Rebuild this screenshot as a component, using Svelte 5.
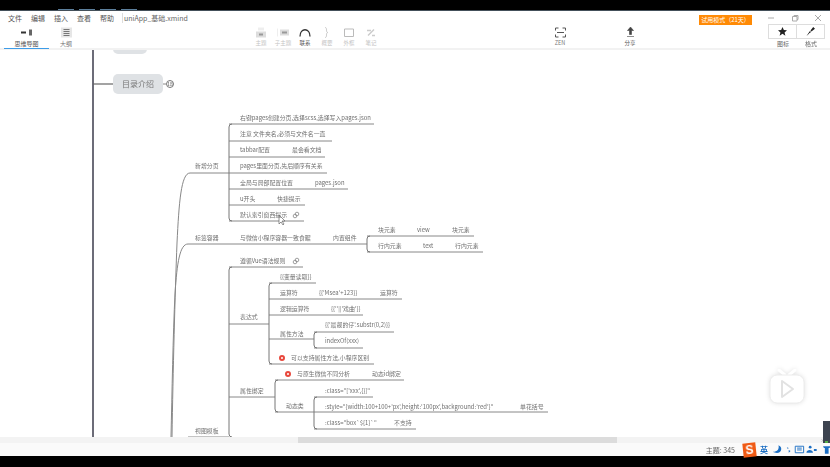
<script lang="ts">
	const menus = ['文件', '编辑', '插入', '查看', '帮助'];
	const tools = ['主题', '子主题', '联系', '概要', '外框', '笔记'];

	// 画布上的文字：x、中线 y、内容
	const labels = [
		[240, 118, '右键pages创建分页,选择scss,选择写入pages.json'],
		[240, 134, '注意  文件夹名,必须与文件名一直'],
		[240, 150, 'tabbar配置'],
		[292, 150, '最会看文档'],
		[240, 166, 'pages里面分页,先后顺序有关系'],
		[195, 166, '新增分页'],
		[240, 183, '全局与局部配置位置'],
		[315, 183, 'pages.json'],
		[240, 199, 'u开头'],
		[277, 199, '快捷提示'],
		[240, 215, '默认索引窗西提示'],
		[195, 238, '标签容器'],
		[240, 238, '与微信小程序容器一致食踞'],
		[333, 238, '内置组件'],
		[378, 230, '块元素'],
		[417, 230, 'view'],
		[452, 230, '块元素'],
		[378, 246, '行内元素'],
		[423, 246, 'text'],
		[455, 246, '行内元素'],
		[240, 261, '遵循Vue语法规则'],
		[280, 277, '{{变量读取}}'],
		[280, 293, '运算符'],
		[319, 293, "{{'Msea'+123}}"],
		[380, 293, '运算符'],
		[280, 309, '逻辑运算符'],
		[331, 309, "{{''||'戏曲'}}"],
		[240, 317, '表达式'],
		[325, 325, "{{'最靓的仔'.substr(0,2)}}"],
		[280, 334, '属性方法'],
		[325, 341, 'indexOf(xxx)'],
		[291, 358, '可以支持属性方法,小程序区别'],
		[297, 374, '与原生微信不同分析'],
		[372, 374, '动态id绑定'],
		[240, 391, '属性绑定'],
		[325, 391, `:class="['xxx',{}]"`],
		[286, 406, '动态类'],
		[325, 407, `:style="{width:100+100+'px',height:'100px',background:'red'}"`],
		[520, 407, '单花括号'],
		[325, 423, ':class="box`${1}`"'],
		[394, 423, '不支持'],
		[195, 431, '视图模板']
	];

	// 节点下划线：x1、x2、y（y 相对整页，画布从 50 开始）
	const rules = [
		[229, 374, 124], [229, 332, 141], [229, 325, 157], [190, 327, 173],
		[229, 348, 189], [229, 305, 205], [229, 304, 221], [188, 367, 244],
		[367, 474, 236], [367, 483, 252], [229, 303, 267], [229, 269, 324],
		[269, 316, 283], [269, 402, 299], [269, 363, 315], [269, 314, 339],
		[314, 394, 332], [314, 363, 348], [269, 374, 364], [229, 275, 397],
		[275, 404, 380], [275, 314, 412], [314, 373, 397], [314, 548, 412],
		[314, 416, 429], [188, 229, 437]
	];

	// 括号竖线：x、y1、y2
	const brackets = [
		[229, 124, 221], [367, 236, 252], [229, 267, 437],
		[269, 283, 364], [314, 332, 348], [275, 380, 412], [314, 397, 429]
	];

	const warnings = [[282, 358], [288, 374]];
	const linkIcons = [[296, 215], [296, 261]];
</script>

<div class="screen">
	<div class="letterbox top">
		<span class="tab-glow"></span><span class="tab-glow"></span><span class="tab-glow"></span><span class="tab-glow"></span>
	</div>

	<div class="window">
		<header class="titlebar">
			<nav class="menus">
				{#each menus as menu}<span>{menu}</span>{/each}
			</nav>
			<span class="filename">uniApp_基础.xmind</span>
			<span class="trial">试用模式（21天）</span>
			<div class="winctl">
				<svg width="8" height="8" viewBox="0 0 8 8"><path d="M1 4h6" stroke="#aaa" fill="none" /></svg>
				<svg width="8" height="8" viewBox="0 0 8 8"><path d="M1.500 2.500h4.500v4.500h-4.500zM3 2.500v-1h4v4h-1" stroke="#aaa" fill="none" /></svg>
				<svg width="8" height="8" viewBox="0 0 8 8"><path d="M1 1l6 6M7 1l-6 6" stroke="#aaa" fill="none" /></svg>
			</div>
		</header>

		<div class="toolbar">
			<div class="tab active">
				<svg width="14" height="10" viewBox="0 0 14 10"><path d="M1 5h5" stroke="#333" stroke-width="2" /><path d="M9 2h3v6h-3z" fill="#666" /></svg>
				<span>思维导图</span>
			</div>
			<div class="tab outline">
				<svg width="11" height="10" viewBox="0 0 11 10"><rect width="11" height="10" fill="#e6e6e6" /><path d="M2.500 2h6M2.500 4h6M2.500 6h6M2.500 8h6" stroke="#777" /></svg>
				<span>大纲</span>
			</div>

			<div class="tools">
				{#each tools as tool, i}
					<div class="tool" class:on={i === 2}>
						<svg width="12" height="10" viewBox="0 0 12 10">
							{#if i === 0}
								<path d="M3 0h6v3h-6z" fill="#eee" /><path d="M1 4h10v6h-10z" fill="#ddd" /><path d="M4 6h4v2h-4z" fill="#999" />
							{:else if i === 1}
								<path d="M0 1v8" stroke="#ddd" /><path d="M3 2h9v6h-9z" fill="#ddd" /><path d="M5 4h5v2h-5z" fill="#999" />
							{:else if i === 2}
								<path d="M1 9c0-9 10-9 10 0" stroke="#333" stroke-width="1.300" fill="none" />
							{:else if i === 3}
								<path d="M4 0c3 0 0 5 3 5c-3 0 0 5-3 5" stroke="#ccc" fill="none" />
							{:else if i === 4}
								<path d="M1.500 1.500h9v7.500h-9z" stroke="#bbb" fill="none" />
							{:else}
								<path d="M3 8l6-6M2 3h4M7 8h3" stroke="#ccc" stroke-width="1.500" fill="none" />
							{/if}
						</svg>
						<span>{tool}</span>
					</div>
				{/each}
			</div>

			<div class="tool zen">
				<svg width="11" height="10" viewBox="0 0 11 10"><path d="M.5 3v-2.500h3M7.500.5h3v2.500M10.500 7v2.500h-3M3.500 9.500h-3v-2.500M2 5h7" stroke="#555" fill="none" /></svg>
				<span>ZEN</span>
			</div>
			<div class="tool share">
				<svg width="9" height="11" viewBox="0 0 9 11"><path d="M4.500 0l3 3.500h-2v4h-2v-4h-2zM1 9.500h7" fill="#444" stroke="#444" stroke-width=".6" /></svg>
				<span>分享</span>
			</div>

			<div class="panel-btns">
				<div class="panel-btn">
					<span class="btn-box"><svg width="9" height="9" viewBox="0 0 10 10"><path d="M5 0l1.500 3.400 3.500.3-2.700 2.300.9 3.600-3.200-2-3.200 2 .9-3.600-2.700-2.300 3.500-.3z" fill="#222" /></svg></span>
					<span>图标</span>
				</div>
				<div class="panel-btn">
					<span class="btn-box"><svg width="9" height="9" viewBox="0 0 10 10"><path d="M5 4l3-4 2 2-4 3zM4.500 4.500l1 1-1.500 1.500-1-1zM3 6.500l.6.600-3 2.900z" fill="#222" /></svg></span>
					<span>格式</span>
				</div>
			</div>
		</div>

		<main class="canvas">
			<svg class="wires" width="830" height="387" viewBox="0 50 830 387">
				<path d="M93 50v387" stroke="#6c6c78" stroke-width="2" fill="none" />
				<path d="M93 84h20" stroke="#666" stroke-width="1.200" fill="none" />
				<path d="M163 84h3" stroke="#888" fill="none" />
				<path d="M190 173c-9 0-11 30-13 70c-2 50-4 130-5 194" stroke="#888" fill="none" />
				<path d="M188 244c-8 0-11 18-13 50c-2 40-3 100-4 143" stroke="#888" fill="none" />
				{#each rules as [x1, x2, y]}
					<path d="M{x1} {y}H{x2}" stroke="#888" fill="none" />
				{/each}
				{#each brackets as [x, y1, y2]}
					<path d="M{x + 3} {y1}q-3 0-3 3V{y2 - 3}q0 3 3 3" stroke="#777" fill="none" />
				{/each}
				{#each warnings as [x, y]}
					<circle cx={x} cy={y} r="2" fill="#fff" stroke="#e8483c" stroke-width="2" />
				{/each}
				{#each linkIcons as [x, y]}
					<circle cx={x - 1} cy={y + 1} r="1.800" fill="none" stroke="#888" stroke-width=".8" />
					<circle cx={x + 1} cy={y - 1} r="1.800" fill="none" stroke="#888" stroke-width=".8" />
				{/each}
				<path d="M279 215l0 9l2-2l2 3l1-1l-2-3h3z" fill="#fff" stroke="#666" stroke-width=".7" />
			</svg>

			<div class="topic clipped"></div>
			<div class="topic main-topic">目录介绍</div>
			<span class="count">18</span>

			{#each labels as [x, y, text]}
				<span class="label" style="left: {x}px; top: {Number(y) - 50}px">{text}</span>
			{/each}

			<div class="bili">
				<svg width="38" height="36" viewBox="0 0 38 36">
					<path d="M11 1l6 5M27 1l-6 5" stroke="#fff" stroke-width="3" stroke-linecap="round" />
					<rect x="2" y="6" width="34" height="28" rx="7" fill="#fff" stroke="#ececec" />
					<path d="M14 12l11 8-11 8z" fill="none" stroke="#e2e2e2" stroke-width="2" stroke-linejoin="round" />
				</svg>
			</div>
		</main>

		<div class="hscroll">
			<span class="thumb"></span>
			<span class="arrow">›</span>
		</div>

		<footer class="status">
			<span class="topics">主题: 345</span>
			<div class="ime">
				<span class="sogou">S</span>
				<span class="ime-text">英</span>
				<svg width="52" height="9" viewBox="0 0 52 9">
					<path d="M8 0c1 4-1 7-6 7c3 2 9 2 9-3c0-2-1-3-3-4z" fill="#1c6fc4" />
					<path d="M17 2l2 1l-1 1zM19 5l2 1l-2 2z" fill="#1c6fc4" />
					<path d="M26 1h9v7h-9zM28 3h5M28 5h5" fill="none" stroke="#1c6fc4" />
					<circle cx="42" cy="2" r="1.500" fill="#1c6fc4" />
					<path d="M38 8c0-4 7-4 7 0zM46 4h3v2h-3z" fill="#1c6fc4" />
				</svg>
				<svg width="8" height="9" viewBox="0 0 8 9"><path d="M0 1h8l-1 2h-1v6h-4v-6h-1z" fill="#1c6fc4" /></svg>
			</div>
		</footer>
	</div>

	<div class="letterbox bottom"></div>
	<div class="side-thumb"><i></i></div>
</div>

<style>
	:global(body) { margin: 0; background: #000; }
	.screen {
		position: relative;
		display: flex; flex-direction: column;
		width: 830px; height: 467px; overflow: hidden;
		font-family: "Noto Sans CJK SC", "Liberation Sans", sans-serif;
		background: #000;
	}
	.letterbox { background: #000; flex-shrink: 0; }
	.letterbox.top { height: 10px; display: flex; align-items: flex-end; gap: 5px; padding-left: 58px; box-sizing: border-box; }
	.letterbox.bottom { height: 11px; }
	.tab-glow { width: 16px; height: 1px; background: #5c7f9c; }
	.window { flex: 1; display: flex; flex-direction: column; background: #fff; min-height: 0; filter: blur(.4px); }

	.titlebar { height: 15px; box-sizing: border-box; display: flex; align-items: center; position: relative; font-size: 7px; color: #555; border-top: 1px solid #44505a; }
	.menus { display: flex; gap: 9px; padding-left: 8px; }
	.filename { margin-left: 8px; padding-left: 1px; border-left: 1px solid #ddd; color: #666; }
	.trial {
		margin-left: auto; margin-right: 15px; margin-top: 3px; width: 53px; height: 10px;
		background: #ff8a05; color: #fff; font-size: 6px; line-height: 10px; text-align: center;
	}
	.winctl { display: flex; gap: 15.500px; margin-right: 8px; }

	.toolbar { height: 25px; box-sizing: border-box; display: flex; align-items: flex-start; border-bottom: 2px solid #f2f2f2; }
	.tab { display: flex; flex-direction: column; align-items: center; height: 24px; font-size: 6px; color: #777; gap: 1px; padding-top: 2px; box-sizing: border-box; }
	.tab.active { width: 45px; margin-left: 4px; color: #555; border-bottom: 1px solid #3d9ce8; }
	.tab.outline { width: 34px; }
	.tools { display: flex; margin-left: 167px; }
	.tool {
		display: flex; flex-direction: column; align-items: center; gap: 1px;
		width: 22px; padding-top: 2px; font-size: 5.500px; color: #c4c4c4;
	}
	.tool svg, .tab svg { height: 11px; }
	.tool.on { color: #555; }
	.tool.zen { width: 30px; margin-left: 163px; color: #777; }
	.tool.share { width: 30px; margin-left: 40px; color: #555; }
	.panel-btns { display: flex; margin-left: 124px; margin-top: -1px; }
	.panel-btn { display: flex; flex-direction: column; align-items: center; font-size: 6px; color: #666; }
	.btn-box { width: 27px; height: 13px; border: 1px solid #ddd; display: flex; align-items: center; justify-content: center; margin-left: -1px; }

	.canvas { flex: 1; position: relative; overflow: hidden; min-height: 0; background: #fff; }
	.wires { position: absolute; left: 0; top: 0; }
	.label { position: absolute; transform: translateY(-50%); font-size: 5.900px; line-height: 1; color: #707070; white-space: nowrap; }
	.topic {
		position: absolute; background: #dfe2e5; border-radius: 5px;
		color: #777; font-size: 8px; line-height: 1; display: flex; align-items: center; justify-content: center;
	}
	.clipped { left: 113px; top: -14px; width: 34px; height: 18px; }
	.main-topic { left: 113px; top: 24px; width: 50px; height: 20px; }
	.count {
		position: absolute; left: 166px; top: 30px; width: 8px; height: 8px; box-sizing: border-box;
		border: 1px solid #777; border-radius: 50%; font-size: 5px; line-height: 6px; text-align: center; color: #555;
	}
	.bili { position: absolute; left: 768px; top: 319px; filter: drop-shadow(0 0 2px rgba(0, 0, 0, .12)); }

	.hscroll { height: 6px; position: relative; background: #f3f3f3; flex-shrink: 0; }
	.thumb { position: absolute; left: 298px; width: 319px; top: 0; bottom: 0; background: #dcdcdc; }
	.arrow { position: absolute; right: 7px; top: -2px; font-size: 7px; line-height: 8px; color: #aaa; }

	.status { height: 13px; display: flex; align-items: center; justify-content: flex-end; background: #fafafa; flex-shrink: 0; font-size: 7px; color: #666; }
	.topics { margin-right: 8px; }
	.ime { display: flex; align-items: center; gap: 3px; width: 87px; }
	.sogou {
		width: 14px; height: 14px; background: #f05a14; color: #fff; font: bold 12px/14px "Liberation Sans", sans-serif;
		text-align: center; transform: rotate(-6deg); margin-right: 1px;
	}
	.ime-text { color: #1c6fc4; font-size: 8px; font-weight: bold; }
	.side-thumb { position: absolute; right: 0; top: 421px; width: 7px; height: 22px; background: #3d4450; }
	.side-thumb i { position: absolute; left: 2px; bottom: 0; width: 3px; height: 2px; background: #56b04a; }
</style>
